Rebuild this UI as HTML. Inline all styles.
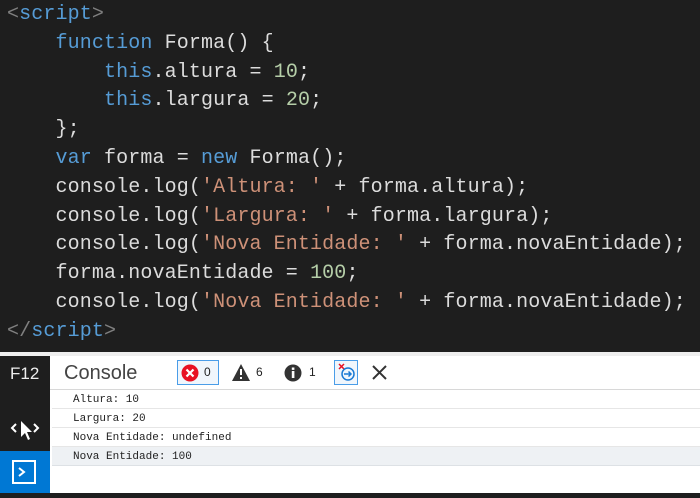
<!DOCTYPE html>
<html><head><style>
*{margin:0;padding:0;box-sizing:border-box}
body{width:700px;height:498px;background:#1e1e1e;position:relative;overflow:hidden}
.code{position:absolute;left:7px;top:1px;font:20px/28.8px "Liberation Mono",monospace;color:#dcdcdc;white-space:pre;letter-spacing:0.12px}
.g{color:#808080}.b{color:#569cd6}.n{color:#b5cea8}.s{color:#ce9178}
.panel{position:absolute;left:0;top:352px;width:700px;height:141px;background:#fff}
.strip{position:absolute;left:0;top:352px;width:700px;height:4px;background:#eee}
.side{position:absolute;left:0;top:356px;width:50px;height:95px;background:#1e1e1e}
.blue{position:absolute;left:0;top:451px;width:50px;height:42px;background:#0078d4}
.f12{position:absolute;left:10px;top:364px;font:17px "Liberation Sans",sans-serif;color:#eee}
.con{position:absolute;left:64px;top:362px;font:20px "Liberation Sans",sans-serif;color:#444}
.hdr{position:absolute;left:50px;top:389px;width:650px;height:1px;background:#d8d8d8}
.row{position:absolute;left:52px;width:648px;height:19px;border-bottom:1px solid #e6e6e6;font:11px/19px "Liberation Mono",monospace;color:#222;padding:1px 0 0 21px}
.box{position:absolute;border:1px solid #4a9de8;background:#f0f6fc}
.t{position:absolute;font:12px "Liberation Sans",sans-serif;color:#222}
</style></head><body>
<div class="code"><span class="g">&lt;</span><span class="b">script</span><span class="g">&gt;</span>
    <span class="b">function</span> Forma() {
        <span class="b">this</span>.altura = <span class="n">10</span>;
        <span class="b">this</span>.largura = <span class="n">20</span>;
    };
    <span class="b">var</span> forma = <span class="b">new</span> Forma();
    console.log(<span class="s">'Altura: '</span> + forma.altura);
    console.log(<span class="s">'Largura: '</span> + forma.largura);
    console.log(<span class="s">'Nova Entidade: '</span> + forma.novaEntidade);
    forma.novaEntidade = <span class="n">100</span>;
    console.log(<span class="s">'Nova Entidade: '</span> + forma.novaEntidade);
<span class="g">&lt;/</span><span class="b">script</span><span class="g">&gt;</span></div>
<div class="panel"></div><div class="strip"></div>
<div class="side"></div><div class="blue"></div>
<div class="f12">F12</div>
<svg style="position:absolute;left:10px;top:415px" width="30" height="30" viewBox="0 0 30 30">
<path d="M6 9 L2 13 L6 17 M24 9 L28 13 L24 17" stroke="#fff" stroke-width="2" fill="none"/>
<path d="M11 6 L11 22 L15 18 L18 25 L20 24 L17 17 L22 17 Z" fill="#fff"/></svg>
<div style="position:absolute;left:12px;top:460px;width:24px;height:24px;border:2px solid #fff"></div>
<svg style="position:absolute;left:17px;top:466px" width="10" height="12"><path d="M2 2 L7 6 L2 10" stroke="#fff" stroke-width="2" fill="none"/></svg>
<div class="con">Console</div>
<div class="box" style="left:177px;top:360px;width:42px;height:25px"></div>
<svg style="position:absolute;left:181px;top:364px" width="18" height="18"><circle cx="9" cy="9" r="8.5" fill="#e81123"/><path d="M5.5 5.5L12.5 12.5M12.5 5.5L5.5 12.5" stroke="#fff" stroke-width="2.2"/></svg>
<div class="t" style="left:204px;top:365px">0</div>
<svg style="position:absolute;left:232px;top:364px" width="18" height="17"><path d="M9 0 L18 17 L0 17 Z" fill="#333"/><path d="M9 5V11" stroke="#fff" stroke-width="2"/><rect x="8" y="13" width="2" height="2" fill="#fff"/></svg>
<div class="t" style="left:256px;top:365px">6</div>
<svg style="position:absolute;left:284px;top:364px" width="18" height="18"><circle cx="9" cy="9" r="8.5" fill="#333"/><rect x="7.8" y="7" width="2.6" height="7" fill="#fff"/><rect x="7.8" y="3.5" width="2.6" height="2.4" fill="#fff"/></svg>
<div class="t" style="left:309px;top:365px">1</div>
<div class="box" style="left:334px;top:360px;width:24px;height:25px"></div>
<svg style="position:absolute;left:336px;top:362px" width="20" height="20"><path d="M3 2L8 7M8 2L3 7" stroke="#e81123" stroke-width="1.5"/><circle cx="12" cy="12" r="6" fill="none" stroke="#1a7ad4" stroke-width="1.5"/><path d="M8 12H15M12.5 9.5L15 12L12.5 14.5" stroke="#1a7ad4" stroke-width="1.5" fill="none"/></svg>
<svg style="position:absolute;left:372px;top:365px" width="15" height="15"><path d="M1 1L14 14M14 1L1 14" stroke="#333" stroke-width="2"/></svg>
<div class="hdr"></div>
<div class="row" style="top:390px">Altura: 10</div>
<div class="row" style="top:409px">Largura: 20</div>
<div class="row" style="top:428px">Nova Entidade: undefined</div>
<div class="row" style="top:447px;background:#eef1f4;border-bottom-color:#dde1e5">Nova Entidade: 100</div>
</body></html>
